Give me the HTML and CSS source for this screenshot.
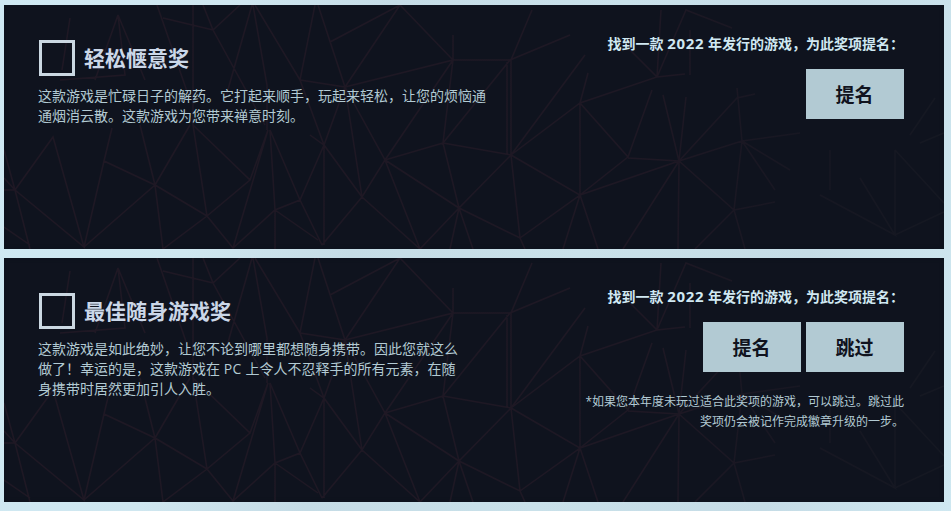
FILE: index.html
```
<!DOCTYPE html>
<html lang="zh-CN">
<head>
  <meta charset="UTF-8" />
  <meta name="viewport" content="width=device-width, initial-scale=1.0" />
  <title>提名</title>
  <link rel="stylesheet" href="styles.css">
</head>
<body>
  <div class="awards">
    <section class="card">
      <svg class="mesh" viewBox="4 5 940 244" aria-hidden="true">
        <defs>
          <linearGradient id="fade" gradientUnits="userSpaceOnUse" x1="4" y1="0" x2="944" y2="0">
            <stop offset="0" stop-color="#1f1824" />
            <stop offset="0.7" stop-color="#1e1824" />
            <stop offset="0.85" stop-color="#171722" />
            <stop offset="1" stop-color="#151822" />
          </linearGradient>
          <path id="mesh-lines" d="M15 190L4 150M4 190H15L30 249M15 190L84 247L53 137L15 190M4 178L15 190M4 227L30 245M84 247L104 161L112 128M84 247L155 185L104 161M155 185L140 125M155 185L190 125M155 185L163 249M155 185L207 216L193 125L250 180L207 216L163 249M207 216L233 248L275 210L300 200L270 130L275 210V249M250 180L268 130L233 248M275 210L318 240M300 200L324 145M300 200L322 245
            M118 15L95 80M118 15L125 75L60 80M118 15L145 80M70 18L62 70M193 5V125M157 5L190 100M203 5L213 30L163 18M213 30L265 125M213 30L240 5M252 5L225 100M253 5L267 85V130M255 5L300 80L315 5M300 80L345 87M300 80L324 145
            M318 5L345 87L400 5L330 42M400 5L453 60L345 87L385 160L362 197L345 87L324 145L310 135M324 145V245M324 145L362 197L322 245M453 60H510L443 143L453 60V35M453 60L385 160L443 143L511 155L459 208L443 143M385 160L459 208L420 249L385 160M362 197L420 249M459 208L450 249M459 208L473 249M459 208L520 238L580 195L511 155L520 238L525 249M511 155V60L532 10M507 155V62M510 60L570 35M511 155L585 55M511 155L580 103V195M580 103L588 73M580 103L628 157L580 195L679 161L628 158M580 195L563 249M580 195L598 249M628 157L652 90M580 103L657 77L630 50M657 77L661 10
            M679 161L663 95M679 161L686 97M679 161L737 98L755 94M679 161L742 141L737 88M679 161L734 210L742 141M679 161L678 249M679 161L623 249M657 77L686 10L732 28M657 77L685 74M690 75V30M742 141L775 190M742 141L790 170M742 141L800 133M734 210L775 202M734 210L745 249M734 210L695 249M820 195L895 235L860 178M820 195L895 235L944 212M895 235V150M895 150L944 203M830 150V190M910 135L935 98M920 143L944 133" />
        </defs>
        <use href="#mesh-lines" />
      </svg>
      <div class="info">
        <div class="title-row">
          <span class="checkbox"></span>
          <h2>轻松惬意奖</h2>
        </div>
        <p class="desc">这款游戏是忙碌日子的解药。它打起来顺手，玩起来轻松，让您的烦恼通<br>通烟消云散。这款游戏为您带来禅意时刻。</p>
      </div>
      <div class="actions">
        <p class="prompt">找到一款 <span class="year">2022</span> 年发行的游戏，为此奖项提名：</p>
        <div class="buttons">
          <button type="button">提名</button>
        </div>
      </div>
    </section>

    <section class="card">
      <svg class="mesh" viewBox="4 5 940 244" aria-hidden="true">
        <use href="#mesh-lines" />
      </svg>
      <div class="info">
        <div class="title-row">
          <span class="checkbox"></span>
          <h2>最佳随身游戏奖</h2>
        </div>
        <p class="desc">这款游戏是如此绝妙，让您不论到哪里都想随身携带。因此您就这么<br>做了！幸运的是，这款游戏在 <span class="latin">PC</span> 上令人不忍释手的所有元素，在随<br>身携带时居然更加引人入胜。</p>
      </div>
      <div class="actions">
        <p class="prompt">找到一款 <span class="year">2022</span> 年发行的游戏，为此奖项提名：</p>
        <div class="buttons">
          <button type="button">提名</button>
          <button type="button">跳过</button>
        </div>
        <p class="note">*如果您本年度未玩过适合此奖项的游戏，可以跳过。跳过此<br>奖项仍会被记作完成徽章升级的一步。</p>
      </div>
    </section>
  </div>
</body>
</html>
```
FILE: styles.css
```
* {
  box-sizing: border-box;
}
body {
  margin: 0;
  height: 511px;
  overflow: hidden;
  font-family: "Open Sans", "Noto Sans CJK SC", sans-serif;
  text-spacing-trim: space-all;
  background: linear-gradient(100deg, #cfe9f3 0%, #cfe7f0 22%, #c5dce6 38%, #c9e1ea 60%, #c5dce6 82%, #cfe8f1 100%);
}
h2, p {
  margin: 0;
}
.awards {
  display: flex;
  flex-direction: column;
  gap: 9px;
  width: 940px;
  margin-left: 4px;
  padding-top: 5px;
}
.card {
  position: relative;
  display: flex;
  justify-content: space-between;
  height: 244px;
  padding: 29px 40px 0 34px;
  background: #0f131e;
  box-shadow: inset 0 0 4px #0b131c;
}
.mesh {
  position: absolute;
  inset: 0;
  width: 940px;
  height: 244px;
  fill: none;
  stroke: url(#fade);
  stroke-width: 1.5;
}
.info, .actions {
  position: relative;
  white-space: nowrap;
}
.info {
  padding-top: 6px;
}
.title-row {
  display: flex;
  align-items: center;
  gap: 9px;
  height: 36px;
  margin-left: 1px;
}
.checkbox {
  width: 36px;
  height: 36px;
  border: 3px solid #cbd8e2;
}
h2 {
  font-size: 21px;
  line-height: 36px;
  color: #cbd7e8;
}
.desc {
  margin-top: 10px;
  font-size: 14px;
  line-height: 20px;
  color: #b2cad3;
}
.latin {
  letter-spacing: 0.5px;
}
.actions {
  display: flex;
  flex-direction: column;
  align-items: flex-end;
}
.prompt {
  font-size: 14px;
  font-weight: bold;
  line-height: 20px;
  color: #d0e8f2;
}
.year {
  font-size: 15px;
  letter-spacing: 0.7px;
  line-height: 1;
}
.buttons {
  display: flex;
  gap: 5px;
  margin-top: 15px;
}
button {
  width: 98px;
  height: 50px;
  padding: 0 1px 0 0;
  border: none;
  background: #b2cad3;
  color: #10131e;
  font-family: inherit;
  font-size: 19px;
  font-weight: bold;
}
.note {
  margin-top: 20px;
  font-size: 12px;
  line-height: 20px;
  text-align: right;
  color: #b2cad3;
}
```
